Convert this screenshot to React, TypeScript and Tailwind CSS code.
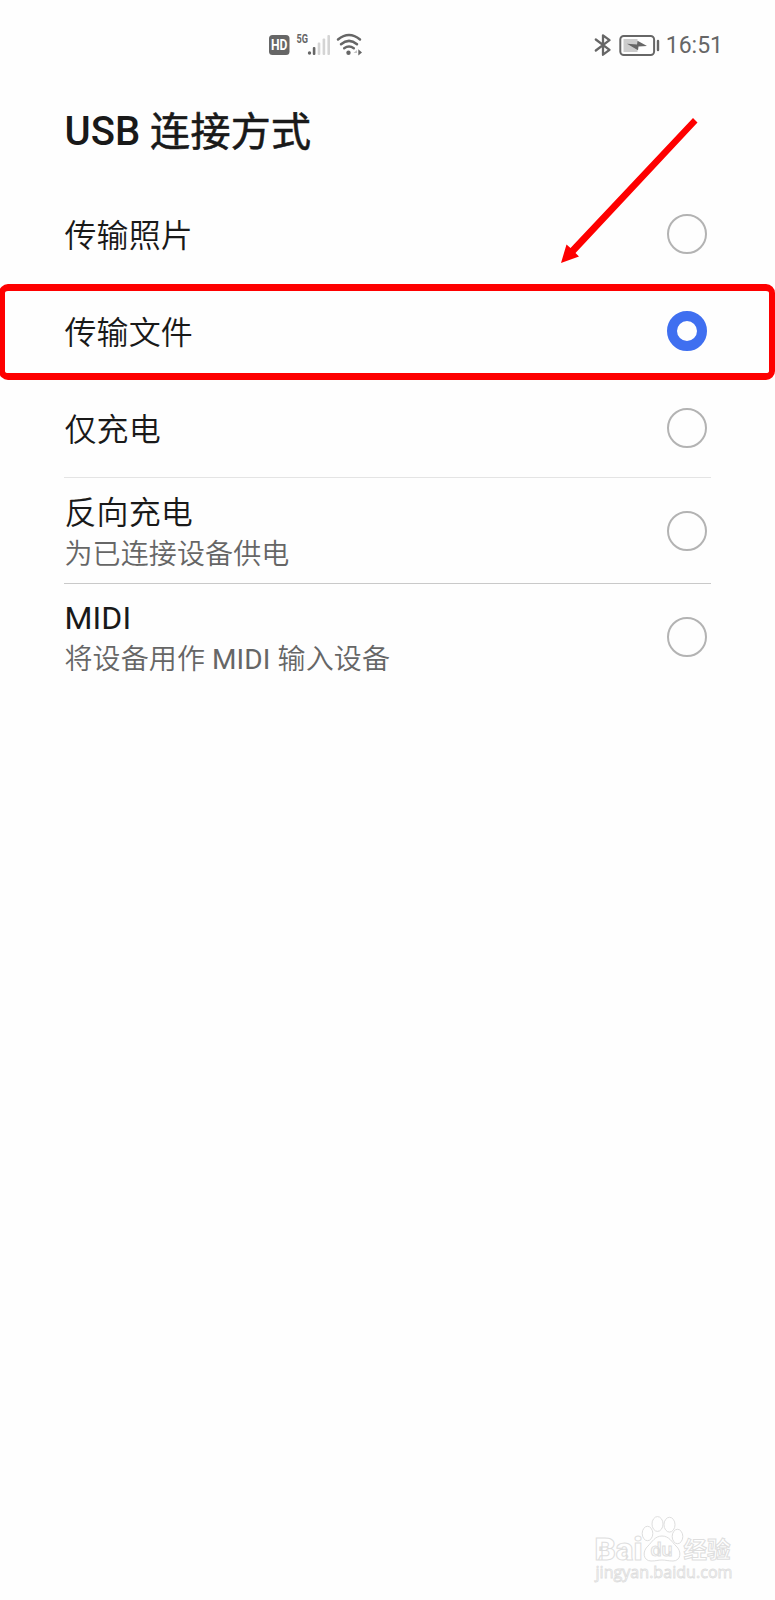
import { useState } from "react";

const options = [
  { id: "photo", title: "传输照片" },
  { id: "file", title: "传输文件" },
  { id: "charge", title: "仅充电" },
  { id: "reverse", title: "反向充电", description: "为已连接设备供电" },
  {
    id: "midi",
    title: <span className="font-normal">MIDI</span>,
    description: (
      <>
        将设备用作 <span className="font-normal">MIDI</span> 输入设备
      </>
    ),
  },
];

const rowStyles: Record<string, string> = {
  photo: "h-[97px]",
  file: "h-[97px]",
  charge: "h-[99px] border-b border-[#e4e4e4]",
  reverse: "h-[106px] border-b border-[#c9c9c9]",
  midi: "h-[105px]",
};

const labelStyles: Record<string, string> = {
  photo: "pt-[5px]",
  file: "pt-[5px]",
  charge: "pt-[3px]",
  reverse: "pt-[7px]",
  midi: "pt-[5px]",
};

function StatusBar() {
  return (
    <div className="flex h-[90px] items-center justify-between pl-[269px] pr-[52px] text-[#666]">
      {/* HD, signal and wifi */}
      <svg className="overflow-visible" width="94" height="24" viewBox="0 0 94 24" fill="currentColor">
        <rect x="0" y="2" width="20.5" height="20" rx="3.5" />
        <text x="10.2" y="17" fontSize="14" fontWeight="700" fill="#fff" textAnchor="middle" textLength="16.5" lengthAdjust="spacingAndGlyphs">HD</text>
        <text x="27.5" y="10" fontSize="12.5" fontWeight="700" textLength="11.5" lengthAdjust="spacingAndGlyphs">5G</text>
        <circle cx="40.5" cy="20" r="1.7" />
        <rect x="43.8" y="14" width="2.6" height="8" rx="1" />
        <g fill="#d4d4d4">
          <rect x="48.7" y="9.5" width="2.6" height="12.5" rx="1" />
          <rect x="53.6" y="5.5" width="2.6" height="16.5" rx="1" />
          <rect x="58.4" y="2" width="2.6" height="20" rx="1" />
        </g>
        <g fill="none" stroke="currentColor" strokeWidth="2.5" strokeLinecap="round">
          <path d="M69 6.5 Q80 -2.5 91 6.5" />
          <path d="M72 11.2 Q80 4.5 88 11.2" />
          <path d="M75.2 15.3 Q80 11.8 84.8 15.3" />
        </g>
        <circle cx="79.5" cy="19.8" r="2.2" />
        <path d="M89.3 16.3 L93 19.6 L89.3 22.6 Z" />
        <path d="M88 17 L84.5 20 L88 20 Z" fill="#c4c4c4" />
      </svg>
      <div className="flex items-center">
        <svg width="67" height="24" viewBox="0 0 67 24" fill="none" stroke="currentColor">
          <path d="M1.8 6.5 L15.5 16.8 L9 21.7 V2.3 L15.5 7.2 L1.8 17.5" strokeWidth="2.3" strokeLinejoin="round" strokeLinecap="round" />
          <rect x="26.3" y="3" width="33.8" height="19" rx="3.5" strokeWidth="2" />
          <rect x="29.5" y="6" width="14" height="13" fill="#ccc" stroke="none" />
          <path d="M33 10.8 L43 11.5 L43.5 7.8 L53 13.1 L44.5 13.6 L44 17.3 Z" fill="currentColor" stroke="none" />
          <path d="M64 8 V17" strokeWidth="2.4" strokeLinecap="round" />
        </svg>
        <span className="ml-[5px] pt-px text-[23px] leading-none">16:51</span>
      </div>
    </div>
  );
}

function Watermark() {
  return (
    <svg width="150" height="72" viewBox="0 0 150 72" fill="#fff" stroke="#dedede" strokeWidth="1">
      <text x="3.5" y="44" fontSize="32" fontWeight="900" textLength="48" lengthAdjust="spacingAndGlyphs">Bai</text>
      <path d="M71 20 C78 20 81 26 85 30 C91 35 90 45 82 45 C77 45 75 44 71 44 C67 44 65 45 60 45 C52 45 51 35 57 30 C61 26 64 20 71 20 Z" />
      <ellipse cx="56.5" cy="17.5" rx="5.3" ry="7.2" />
      <ellipse cx="66.5" cy="8" rx="5.5" ry="7.4" />
      <ellipse cx="78.5" cy="8.7" rx="5.5" ry="7.4" />
      <ellipse cx="86.5" cy="20.5" rx="5.3" ry="7.2" />
      <text x="59.5" y="40" fontSize="19" fontWeight="500" textLength="22" lengthAdjust="spacingAndGlyphs">du</text>
      <text x="92.5" y="42" fontSize="23" fontWeight="700" textLength="47" lengthAdjust="spacingAndGlyphs">经验</text>
      <text x="4.5" y="62" fontSize="17" textLength="137" lengthAdjust="spacingAndGlyphs" className="font-['Open_Sans',sans-serif]" strokeWidth="0.9">jingyan.baidu.com</text>
    </svg>
  );
}

export default function App() {
  const [selected, setSelected] = useState("file");

  return (
    <div className="relative flex h-[1600px] w-[775px] flex-col overflow-hidden bg-[#fefefe] font-[Roboto,'Noto_Sans_CJK_SC',sans-serif] text-[#191919]">
      <StatusBar />

      <h1 className="flex h-[95px] items-start whitespace-pre pl-[64.5px] pt-[12px] text-[40px] font-medium leading-[60px]">
        USB <span className="pt-px font-normal tracking-[0.3px] [-webkit-text-stroke:0.6px_#191919]">连接方式</span>
      </h1>

      <div className="flex flex-col">
        {options.map((option) => (
          <div key={option.id} className="relative px-16">
            <button
              onClick={() => setSelected(option.id)}
              className={`flex w-full items-center justify-between pl-[0.5px] pr-[4.5px] text-left ${rowStyles[option.id]}`}
            >
              <span className={`flex flex-col font-[350] ${labelStyles[option.id]}`}>
                <span className="text-[32px] leading-[42px] tracking-[0.1px]">{option.title}</span>
                {option.description && (
                  <span className="text-[28px] leading-[42px] tracking-[0.12px] text-[#666]">{option.description}</span>
                )}
              </span>
              <span
                className={`size-10 shrink-0 rounded-full ${
                  selected === option.id ? "border-[10px] border-[#3f6ff0]" : "border-2 border-[#b3b3b3]"
                }`}
              />
            </button>

            {/* highlight around the file transfer row */}
            {option.id === "file" && (
              <div className="pointer-events-none absolute -bottom-px -left-px right-0 top-[2px] rounded-[9px] border-x-[6px] border-y-[7px] border-[#fe0000]" />
            )}
          </div>
        ))}
      </div>

      {/* arrow pointing at the row */}
      <svg className="pointer-events-none absolute left-[555px] top-[112px]" width="150" height="160" viewBox="0 0 150 160" fill="#fe0000">
        <path d="M138 6 L142.5 10.5 L20.5 141 L24 144.5 L6 151 L11.5 132.5 L15.5 136 Z" />
      </svg>

      <div className="mt-auto flex justify-end pb-[12px] pr-[34px]">
        <Watermark />
      </div>
    </div>
  );
}
